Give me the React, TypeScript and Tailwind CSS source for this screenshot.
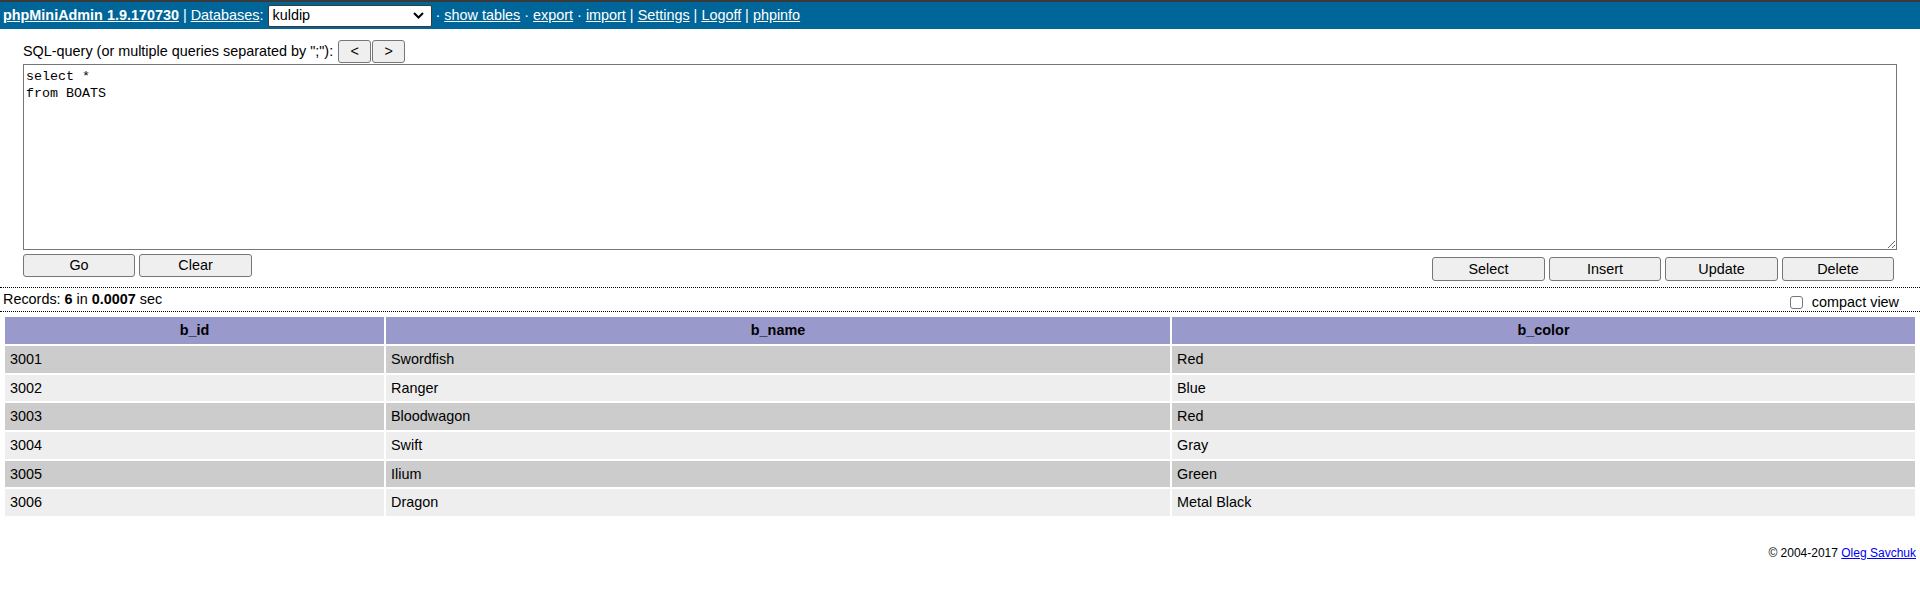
import React from "react"

const rows = [
    { id: "3001", name: "Swordfish", color: "Red" },
    { id: "3002", name: "Ranger", color: "Blue" },
    { id: "3003", name: "Bloodwagon", color: "Red" },
    { id: "3004", name: "Swift", color: "Gray" },
    { id: "3005", name: "Ilium", color: "Green" },
    { id: "3006", name: "Dragon", color: "Metal Black" },
]

function Btn({ label, className }: { label: string; className?: string }) {
    return (
        <button
            type="button"
            className={
                "flex items-center justify-center rounded-[3px] border border-[#767676] bg-[#efefef] text-[14.4px] text-black " +
                (className ?? "")
            }
        >
            {label}
        </button>
    )
}

export default function App() {
    return (
        <div className="min-h-[593px] bg-white font-['Liberation_Sans',Arial,sans-serif] text-[14.4px] leading-[17px] text-black">
            {/* top bar */}
            <div className="flex h-[29px] items-center whitespace-pre border-t-2 border-[#3a3a3a] bg-[#006699] px-[3px] text-white">
                <a href="#" className="font-bold underline">phpMiniAdmin 1.9.170730</a>
                <span> | </span>
                <a href="#" className="underline">Databases</a>
                <span>: </span>
                <div className="flex h-[22px] w-[164px] items-center justify-between rounded-[2px] border border-[#3b3b3b] bg-white pl-[4px] pr-[7px] text-black">
                    <span>kuldip</span>
                    <svg width="11" height="7" viewBox="0 0 11 7">
                        <path d="M1 1l4.5 4.5L10 1" fill="none" stroke="#000" strokeWidth="2" />
                    </svg>
                </div>
                <span> · </span>
                <a href="#" className="underline">show tables</a>
                <span> · </span>
                <a href="#" className="underline">export</a>
                <span> · </span>
                <a href="#" className="underline">import</a>
                <span> | </span>
                <a href="#" className="underline">Settings</a>
                <span> | </span>
                <a href="#" className="underline">Logoff</a>
                <span> | </span>
                <a href="#" className="underline">phpinfo</a>
            </div>

            {/* query form */}
            <div className="px-[23px]">
                <div className="mt-[11px] flex items-center">
                    <span>SQL-query (or multiple queries separated by ";"):</span>
                    <div className="ml-[5px] flex gap-[1px]">
                        <Btn label="<" className="h-[23px] w-[33px]" />
                        <Btn label=">" className="h-[23px] w-[33px]" />
                    </div>
                </div>
                <textarea
                    readOnly
                    defaultValue={"select *\nfrom BOATS"}
                    className="mt-[1px] block h-[186px] w-full border border-[#767676] px-[2px] pt-[3px] pb-[1px] font-['Liberation_Mono',monospace] text-[13.33px] leading-[17px] text-black outline-none"
                />
                <div className="flex items-start justify-between pr-[3px]">
                    <div className="mt-[4px] flex gap-[4px]">
                        <Btn label="Go" className="h-[23px] w-[112px]" />
                        <Btn label="Clear" className="h-[23px] w-[113px]" />
                    </div>
                    <div className="mt-[7px] flex gap-[4px]">
                        <Btn label="Select" className="h-[24px] w-[113px]" />
                        <Btn label="Insert" className="h-[24px] w-[112px]" />
                        <Btn label="Update" className="h-[24px] w-[113px]" />
                        <Btn label="Delete" className="h-[24px] w-[112px]" />
                    </div>
                </div>
            </div>

            {/* records line */}
            <div className="mt-[6px] flex h-[25px] items-center justify-between border-y border-dotted border-black pl-[3px] pr-[21px]">
                <span>
                    Records: <b>6</b> in <b>0.0007</b> sec
                </span>
                <label className="mt-[5px] flex items-center gap-[9px]">
                    <span className="block h-[13px] w-[13px] rounded-[3px] border border-[#767676] bg-white" />
                    <span>compact view</span>
                </label>
            </div>

            {/* results */}
            <div className="mt-[3px] px-[3px]">
                <table className="w-full table-fixed border-separate border-spacing-[2px]">
                    <colgroup>
                        <col className="w-[379px]" />
                        <col className="w-[784px]" />
                        <col />
                    </colgroup>
                    <thead>
                        <tr className="bg-[#9999cc]">
                            <th className="h-[27px] p-0 text-center font-bold">b_id</th>
                            <th className="h-[27px] p-0 text-center font-bold">b_name</th>
                            <th className="h-[27px] p-0 text-center font-bold">b_color</th>
                        </tr>
                    </thead>
                    <tbody>
                        {rows.map((r, i) => (
                            <tr key={r.id} className={i % 2 === 0 ? "bg-[#cccccc]" : "bg-[#eeeeee]"}>
                                <td className="h-[26.7px] py-0 pl-[5px]">{r.id}</td>
                                <td className="h-[26.7px] py-0 pl-[5px]">{r.name}</td>
                                <td className="h-[26.7px] py-0 pl-[5px]">{r.color}</td>
                            </tr>
                        ))}
                    </tbody>
                </table>
            </div>

            {/* footer */}
            <div className="mt-[28px] pr-[4px] text-right text-[12px] leading-[14px]">
                © 2004-2017{" "}
                <a href="#" className="text-[#0000ee] underline">
                    Oleg Savchuk
                </a>
            </div>
        </div>
    )
}
